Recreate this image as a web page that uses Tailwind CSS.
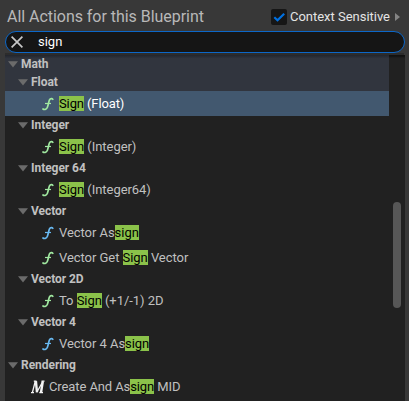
<!DOCTYPE html>
<html lang="en">
<head>
<meta charset="utf-8">
<title>Blueprint Actions</title>
<script src="https://cdn.jsdelivr.net/npm/@tailwindcss/browser@4"></script>
</head>
<body class="w-[409px] h-[401px] overflow-hidden bg-[#383838] font-[Roboto,sans-serif] text-[13px] text-[#c0c0c0]">
<svg class="hidden">
  <symbol id="tri" viewBox="0 0 10 7"><path d="M0 .3H10L5 6.5Z" fill="#6b6b6b"/></symbol>
  <symbol id="fn" viewBox="0 0 12 14"><path d="M10.800 2.300C10.300 1.400 8.300 1.200 7.500 2.800C6.800 4.200 6.200 8.500 5.300 10.500C4.400 12.600 2 12.900 1 12" fill="none" stroke="currentColor" stroke-width="1.700" stroke-linecap="round"/><path d="M3 6.500H9" stroke="currentColor" stroke-width="1.200"/></symbol>
</svg>
<div class="flex h-[401px] flex-col px-[5px]">
  <header class="flex h-[31px] shrink-0 items-center pt-[2px] pl-[2px] pr-1">
    <h1 class="flex-1 whitespace-nowrap text-[16px] leading-5 tracking-[-0.04px] text-[#b8b8b8]">All Actions for this Blueprint</h1>
    <div class="flex h-4 w-4 items-center justify-center rounded-[2px] bg-[#161616]">
      <svg class="h-4 w-4" viewBox="0 0 16 16"><path d="M3.300 8.300L6.500 11.300L13.200 4.700" fill="none" stroke="#0070e0" stroke-width="2.200"/></svg>
    </div>
    <span class="ml-[3px] w-[105px] whitespace-nowrap leading-4 tracking-[-0.02px] text-[#e4e4e4]">Context Sensitive</span>
    <svg class="h-2 w-[5px]" viewBox="0 0 5 8"><path d="M0 0L5 4L0 8Z" fill="#858585"/></svg>
  </header>
  <div class="flex h-[22px] w-[400px] shrink-0 items-center rounded-full border border-[#0c67c8] bg-[#151515] pl-[5px]">
    <svg class="h-3 w-3" viewBox="0 0 12 12"><path d="M.6.6L11.400 11.400M11.400.6L.6 11.400" stroke="#c8c8c8" stroke-width="1.700"/></svg>
    <span class="ml-[15px] leading-4 text-white">sign</span>
  </div>
  <div class="h-[2px] shrink-0 bg-[#2c2c2c]"></div>
  <main class="flex h-[346px] w-[400px] bg-[#212121] shadow-[inset_0_3px_2px_-1px_rgba(0,0,0,0.5)]">
    <ul class="w-[384px] whitespace-nowrap tracking-[-0.05px]">
      <li class="flex h-[18px] items-center bg-linear-to-b from-[#22252c] to-[#31353e] to-20% pl-[3px] text-[12px] font-bold"><svg class="mr-[3px] h-[7px] w-[10px]"><use href="#tri"/></svg>Math</li>
      <li class="flex h-[18px] items-center bg-[#31353e] pl-[13px] text-[12px] font-bold"><svg class="mr-[3px] h-[7px] w-[10px]"><use href="#tri"/></svg>Float</li>
      <li class="flex h-[25px] items-center bg-[#42586f] pl-[37px] text-white"><svg class="mr-[5px] h-[14px] w-3 text-[#a0e8a0]"><use href="#fn"/></svg><span class="tracking-[-0.12px]"><mark class="bg-[#8bc24a] text-black">Sign</mark> (Float)</span></li>
      <li class="flex h-[18px] items-center pl-[13px] text-[12px] font-bold"><svg class="mr-[3px] h-[7px] w-[10px]"><use href="#tri"/></svg>Integer</li>
      <li class="flex h-[25px] items-center pl-[37px]"><svg class="mr-[5px] h-[14px] w-3 text-[#a0e8a0]"><use href="#fn"/></svg><span><mark class="bg-[#8bc24a] text-black">Sign</mark> (Integer)</span></li>
      <li class="flex h-[18px] items-center pl-[13px] text-[12px] font-bold"><svg class="mr-[3px] h-[7px] w-[10px]"><use href="#tri"/></svg>Integer 64</li>
      <li class="flex h-[25px] items-center pl-[37px]"><svg class="mr-[5px] h-[14px] w-3 text-[#a0e8a0]"><use href="#fn"/></svg><span><mark class="bg-[#8bc24a] text-black">Sign</mark> (Integer64)</span></li>
      <li class="flex h-[18px] items-center pl-[13px] text-[12px] font-bold"><svg class="mr-[3px] h-[7px] w-[10px]"><use href="#tri"/></svg>Vector</li>
      <li class="flex h-[25px] items-center pl-[37px]"><svg class="mr-[5px] h-[14px] w-3 text-[#68b8f0]"><use href="#fn"/></svg><span>Vector As<mark class="bg-[#8bc24a] text-black">sign</mark></span></li>
      <li class="flex h-[25px] items-center pl-[37px]"><svg class="mr-[5px] h-[14px] w-3 text-[#a0e8a0]"><use href="#fn"/></svg><span>Vector Get <mark class="bg-[#8bc24a] text-black">Sign</mark> Vector</span></li>
      <li class="flex h-[18px] items-center pl-[13px] text-[12px] font-bold"><svg class="mr-[3px] h-[7px] w-[10px]"><use href="#tri"/></svg>Vector 2D</li>
      <li class="flex h-[25px] items-center pl-[37px]"><svg class="mr-[5px] h-[14px] w-3 text-[#a0e8a0]"><use href="#fn"/></svg><span>To <mark class="bg-[#8bc24a] text-black">Sign</mark> (+1/-1) 2D</span></li>
      <li class="flex h-[18px] items-center pl-[13px] text-[12px] font-bold"><svg class="mr-[3px] h-[7px] w-[10px]"><use href="#tri"/></svg>Vector 4</li>
      <li class="flex h-[25px] items-center pl-[37px]"><svg class="mr-[5px] h-[14px] w-3 text-[#68b8f0]"><use href="#fn"/></svg><span>Vector 4 As<mark class="bg-[#8bc24a] text-black">sign</mark></span></li>
      <li class="flex h-[18px] items-center pl-[3px] text-[12px] font-bold"><svg class="mr-[3px] h-[7px] w-[10px]"><use href="#tri"/></svg>Rendering</li>
      <li class="flex h-[25px] items-center pl-[25px]"><svg class="mr-[4px] h-[14px] w-[15px]" viewBox="0 0 15 14" fill="none" stroke="#f4f4f4"><path d="M1 12.600H4M2.400 12.500L5.200 1.500M3.800 1.200H6.500M11.500 1.200H14.500M7 12L12.800 1.500" stroke-width="1.300"/><path d="M5.900 1.200L7 12.300M12.800 1.500L11 12.500" stroke-width="2.400"/><path d="M9.300 12.600H13" stroke-width="1.300"/></svg><span class="tracking-[-0.1px]">Create And As<mark class="bg-[#8bc24a] text-black">sign</mark> MID</span></li>
    </ul>
    <div class="w-4 pl-1 pt-[147px]"><div class="h-[106px] w-2 rounded-full bg-[#575757]"></div></div>
  </main>
</div>
</body>
</html>
